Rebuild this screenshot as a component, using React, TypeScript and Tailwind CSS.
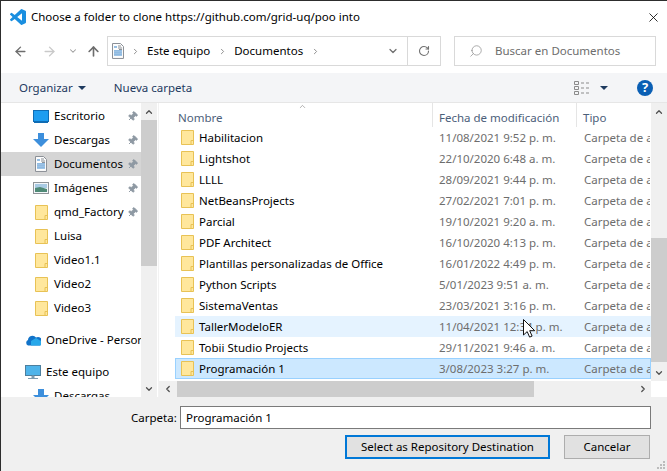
import React from 'react';
import { ArrowLeft, ArrowRight, ArrowUp, ChevronDown, ChevronUp, ChevronLeft, ChevronRight, RotateCw, Search, X, Pin } from 'lucide-react';

const FolderIcon = ({ className = '' }: { className?: string }) => (
  <svg width="13" height="15" viewBox="0 0 13 15" className={`shrink-0 ${className}`}>
    <path d="M.5.5h12v14H.5z" fill="#ffe79c" stroke="#e8c255" />
    <path d="M10 14.5v-4h2.5" fill="none" stroke="#e8c255" />
  </svg>
);

const DocIcon = ({ size = 12 }: { size?: number }) => (
  <svg width={size} height={size * 1.33} viewBox="0 0 12 16" className="shrink-0">
    <path d="M.5.5h8l3 3v12H.5z" fill="#fdfdfd" stroke="#8a8f96" />
    <path d="M2 4h3M2 8h8M2 10h8M2 12h8" stroke="#2f7fc9" strokeWidth="1" />
    <path d="M6 3h3M6 5h4M7 6.500h3" stroke="#8a8f96" strokeWidth="1" />
  </svg>
);

const navPinned = [
  { name: 'Escritorio', icon: 'desktop' },
  { name: 'Descargas', icon: 'down' },
  { name: 'Documentos', icon: 'doc', selected: true },
  { name: 'Imágenes', icon: 'image' },
  { name: 'qmd_Factory', icon: 'folder' },
];

const navFolders = ['Luisa', 'Video1.1', 'Video2', 'Video3'];

const files = [
  { name: 'Habilitacion', date: '11/08/2021 9:52 p. m.' },
  { name: 'Lightshot', date: '22/10/2020 6:48 a. m.' },
  { name: 'LLLL', date: '28/09/2021 9:44 p. m.' },
  { name: 'NetBeansProjects', date: '27/02/2021 7:01 p. m.' },
  { name: 'Parcial', date: '19/10/2021 9:20 a. m.' },
  { name: 'PDF Architect', date: '16/10/2020 4:13 p. m.' },
  { name: 'Plantillas personalizadas de Office', date: '16/01/2022 4:49 p. m.' },
  { name: 'Python Scripts', date: '5/01/2023 9:51 a. m.' },
  { name: 'SistemaVentas', date: '23/03/2021 3:16 p. m.' },
  { name: 'TallerModeloER', date: '11/04/2021 12:34 p. m.', hover: true },
  { name: 'Tobii Studio Projects', date: '29/11/2021 9:46 a. m.' },
  { name: 'Programación 1', date: '3/08/2023 3:27 p. m.', selected: true },
];

const NavIcon = ({ type }: { type: string }) => {
  if (type === 'desktop')
    return (
      <svg width="16" height="13" viewBox="0 0 16 13" className="shrink-0">
        <rect x=".5" y=".5" width="15" height="11" fill="#1e9df0" stroke="#0f6cb4" />
        <path d="M1 12.500h14" stroke="#0f6cb4" />
      </svg>
    );
  if (type === 'down')
    return (
      <svg width="16" height="14" viewBox="0 0 16 14" className="shrink-0">
        <path d="M5 0h6v6h5l-8 8-8-8h5z" fill="#3d8fdc" />
      </svg>
    );
  if (type === 'doc') return <DocIcon />;
  if (type === 'image')
    return (
      <svg width="16" height="12" viewBox="0 0 16 12" className="shrink-0">
        <rect x=".5" y=".5" width="15" height="11" fill="#f4f7fa" stroke="#8f9498" />
        <path d="M2 2h12v4H2z" fill="#a9cbe4" />
        <path d="M2 6l5-1 7 2v3H2z" fill="#4f8a76" />
      </svg>
    );
  return <FolderIcon />;
};

const PinIcon = () => <Pin size={11} className="shrink-0 rotate-45 fill-[#8e99a3] text-[#8e99a3]" />;

const Cursor = () => (
  <svg width="13" height="19" viewBox="0 0 13 19" className="absolute left-[522px] top-[318px]">
    <path d="M.5.500v15.500l3.700-3.400 2.400 5.500 2.500-1-2.400-5.400h5z" fill="#fff" stroke="#111" />
  </svg>
);

export default function App() {
  return (
    <div className="relative flex h-[471px] w-[667px] flex-col overflow-hidden border-l border-t border-[#2d2d2d] bg-white font-['Noto_Sans',sans-serif] text-[11.5px] text-black">
      {/* title bar */}
      <div className="flex h-[32px] shrink-0 items-center pl-[9px] pr-[6px]">
        <svg width="16" height="16" viewBox="0 0 24 24" className="shrink-0">
          <path
            d="M23.15 2.587L18.21.21a1.494 1.494 0 0 0-1.705.29l-9.46 8.63-4.12-3.128a.999.999 0 0 0-1.276.057L.327 7.261A1 1 0 0 0 .326 8.74L3.899 12 .326 15.26a1 1 0 0 0 .001 1.479L1.65 17.94a.999.999 0 0 0 1.276.057l4.12-3.128 9.46 8.63a1.492 1.492 0 0 0 1.704.29l4.942-2.377A1.5 1.5 0 0 0 24 20.06V3.939a1.5 1.5 0 0 0-.85-1.352zm-5.146 14.861L10.826 12l7.178-5.448v10.896z"
            fill="#1a8fe0"
          />
        </svg>
        <span className="ml-[5px] whitespace-nowrap">Choose a folder to clone https://github.com/grid-uq/poo into</span>
        <X size={15} strokeWidth={1.3} className="ml-auto" />
      </div>

      {/* address row */}
      <div className="flex h-[40px] shrink-0 items-center pb-[7px] pt-[3px]">
        <ArrowLeft size={15} strokeWidth={2.2} className="ml-[12px] text-[#6d6d6d]" />
        <ArrowRight size={15} strokeWidth={2.2} className="ml-[14px] text-[#c9c9c9]" />
        <ChevronDown size={10} strokeWidth={2.5} className="ml-[11px] text-[#9a9a9a]" />
        <ArrowUp size={15} strokeWidth={2.6} className="ml-[8px] text-[#6d6d6d]" />
        <div className="ml-[6px] flex h-[30px] w-[301px] items-center border border-[#d9d9d9] pl-[4px]">
          <DocIcon />
          <ChevronRight size={9} strokeWidth={2.5} className="ml-[7px] text-[#8a8a8a]" />
          <span className="ml-[7px]">Este equipo</span>
          <ChevronRight size={9} strokeWidth={2.5} className="ml-[8px] text-[#8a8a8a]" />
          <span className="ml-[7px]">Documentos</span>
          <ChevronRight size={9} strokeWidth={2.5} className="ml-[8px] text-[#8a8a8a]" />
          <ChevronDown size={12} strokeWidth={2.5} className="ml-auto mr-[8px] text-[#707070]" />
        </div>
        <div className="flex h-[30px] w-[33px] items-center justify-center border border-l-0 border-[#d9d9d9]">
          <RotateCw size={12} strokeWidth={2.2} className="text-[#707070]" />
        </div>
        <div className="ml-[13px] flex h-[30px] w-[202px] items-center border border-[#d9d9d9] pl-[14px] text-[#6d6d6d]">
          <Search size={14} strokeWidth={1.2} className="-scale-x-100 text-[#8a8a8a]" />
          <span className="ml-[12px]">Buscar en Documentos</span>
        </div>
      </div>

      {/* toolbar */}
      <div className="flex h-[30px] shrink-0 items-center border-b border-[#e6e6e6] bg-[#f4f5f7] pl-[18px] text-[#1e3a5f]">
        <span>Organizar</span>
        <span className="ml-[5px] h-0 w-0 border-x-[4px] border-t-[4px] border-x-transparent border-t-[#1e3a5f]" />
        <span className="ml-[28px]">Nueva carpeta</span>
        <svg width="16" height="14" viewBox="0 0 16 14" className="ml-auto">
          <path d="M.5.500h4v3h-4zM.5 5.500h4v3h-4zM.5 10.500h4v3h-4zM7 2h3M12 2h3M7 7h3M12 7h3M7 12h3M12 12h3" fill="none" stroke="#8b8b8b" />
        </svg>
        <span className="ml-[10px] h-0 w-0 border-x-[4px] border-t-[4px] border-x-transparent border-t-[#1e3a5f]" />
        <span className="ml-[29px] mr-[14px] flex h-[16px] w-[16px] items-center justify-center rounded-full bg-[#0a5fb4] text-[13px] font-bold leading-none text-white">?</span>
      </div>

      {/* main */}
      <div className="flex h-[294px] shrink-0 overflow-hidden">
        {/* nav pane */}
        <div className="flex w-[140px] shrink-0 flex-col overflow-hidden pt-[1px]">
          {navPinned.map((n) => (
            <div key={n.name} className={`flex h-[24px] shrink-0 items-center pl-[32px] ${n.selected ? 'bg-[#d5d5d5]' : ''}`}>
              <div className="flex w-[16px] shrink-0 justify-center"><NavIcon type={n.icon} /></div>
              <span className="ml-[5px] w-[69px] shrink-0 whitespace-nowrap">{n.name}</span>
              <span className="ml-[4px]"><PinIcon /></span>
            </div>
          ))}
          {navFolders.map((n) => (
            <div key={n} className="flex h-[24px] shrink-0 items-center pl-[32px]">
              <div className="flex w-[16px] shrink-0 justify-center"><FolderIcon /></div>
              <span className="ml-[5px]">{n}</span>
            </div>
          ))}
          <div className="mt-[8px] flex h-[24px] shrink-0 items-center pl-[24px]">
            <svg width="16" height="11" viewBox="0 0 16 11" className="shrink-0">
              <path d="M3 10.500a3 3 0 0 1 0-5.500 4.500 4.500 0 0 1 8-2.500 4 4 0 0 1 4 8z" fill="#1173c9" />
              <path d="M6 10.500l9 0a2.500 2.500 0 0 0 0-5L11 3 6 6z" fill="#28a8ea" />
            </svg>
            <span className="ml-[5px] whitespace-nowrap">OneDrive - Persor</span>
          </div>
          <div className="mt-[8px] flex h-[24px] shrink-0 items-center pl-[24px]">
            <svg width="16" height="15" viewBox="0 0 16 15" className="shrink-0">
              <rect x=".5" y=".5" width="15" height="10" fill="#4fb4ea" stroke="#4d7f9e" />
              <path d="M7 11h2v2H7zM3 13.500h10" fill="#7d9cb0" stroke="#7d9cb0" />
            </svg>
            <span className="ml-[5px]">Este equipo</span>
          </div>
          <div className="flex h-[24px] shrink-0 items-center pl-[32px]">
            <NavIcon type="down" />
            <span className="ml-[5px]">Descargas</span>
          </div>
        </div>

        {/* nav scrollbar */}
        <div className="flex w-[16px] shrink-0 flex-col bg-[#f0f0f0]">
          <div className="flex h-[17px] shrink-0 items-center justify-center"><ChevronUp size={10} strokeWidth={3} className="text-[#505050]" /></div>
          <div className="h-[146px] shrink-0 bg-[#cdcdcd]" />
          <div className="flex-1" />
          <div className="flex h-[17px] shrink-0 items-center justify-center"><ChevronDown size={10} strokeWidth={3} className="text-[#505050]" /></div>
        </div>

        {/* file list */}
        <div className="ml-[1px] flex min-w-0 flex-1 flex-col border-l border-[#f2f2f2]">
          <div className="flex min-h-0 flex-1">
            <div className="flex min-w-0 flex-1 flex-col pl-[16px]">
              <div className="relative flex h-[24px] shrink-0 text-[#4c607a]">
                <span className="w-[257px] pl-[3px] pt-[6px]">Nombre</span>
                <ChevronUp size={9} strokeWidth={1.5} className="absolute left-[123px] -top-[1px] text-[#777]" />
                <span className="w-[144px] border-l border-[#e5e5e5] pl-[6px] pt-[6px]">Fecha de modificación</span>
                <span className="border-l border-[#e5e5e5] pl-[6px] pt-[6px]">Tipo</span>
              </div>
              {files.map((f) => (
                <div
                  key={f.name}
                  className={`flex h-[21px] shrink-0 items-center overflow-hidden whitespace-nowrap border ${
                    f.selected ? 'border-[#99d1ff] bg-[#cce8ff]' : f.hover ? 'border-[#e5f3ff] bg-[#e5f3ff]' : 'border-transparent'
                  }`}
                >
                  <div className="flex w-[263px] shrink-0 items-center pl-[5px]">
                    <FolderIcon />
                    <span className="ml-[5px]">{f.name}</span>
                  </div>
                  <span className="w-[145px] shrink-0 text-[#6d6d6d]">{f.date}</span>
                  <span className="text-[#6d6d6d]">Carpeta de archivos</span>
                </div>
              ))}
            </div>
            <div className="flex w-[16px] shrink-0 flex-col bg-[#f0f0f0]">
              <div className="flex h-[17px] shrink-0 items-center justify-center"><ChevronUp size={10} strokeWidth={3} className="text-[#505050]" /></div>
              <div className="mt-[118px] h-[124px] shrink-0 bg-[#cdcdcd]" />
              <div className="flex-1" />
              <div className="flex h-[17px] shrink-0 items-center justify-center"><ChevronDown size={10} strokeWidth={3} className="text-[#505050]" /></div>
            </div>
          </div>
          <div className="mr-[16px] flex h-[16px] shrink-0 items-center bg-[#f0f0f0]">
            <div className="flex w-[18px] shrink-0 justify-center"><ChevronLeft size={10} strokeWidth={3} className="text-[#505050]" /></div>
            <div className="h-full w-[357px] shrink-0 bg-[#cdcdcd]" />
            <div className="flex flex-1 justify-end pr-[3px]"><ChevronRight size={10} strokeWidth={3} className="text-[#505050]" /></div>
          </div>
        </div>
      </div>

      {/* footer */}
      <div className="relative flex flex-1 flex-col bg-[#f0f0f0]">
        <div className="mt-[9px] flex items-center">
          <span className="ml-[130px] w-[49px]">Carpeta:</span>
          <div className="flex h-[23px] w-[471px] items-center border border-[#7a7a7a] bg-white pl-[5px]">Programación 1</div>
        </div>
        <div className="mt-[6px] flex">
          <button className="ml-[344px] h-[24px] w-[205px] border-2 border-[#0078d7] bg-[#e1e1e1]">Select as Repository Destination</button>
          <button className="ml-[14px] h-[24px] w-[86px] border border-[#adadad] bg-[#e1e1e1]">Cancelar</button>
        </div>
        <svg width="9" height="9" viewBox="0 0 9 9" className="absolute bottom-[1px] right-[1px]">
          <path d="M6 0h2v2H6zM3 3h2v2H3zM6 3h2v2H6zM0 6h2v2H0zM3 6h2v2H3zM6 6h2v2H6z" fill="#bcbcbc" />
        </svg>
      </div>
      <Cursor />
    </div>
  );
}
